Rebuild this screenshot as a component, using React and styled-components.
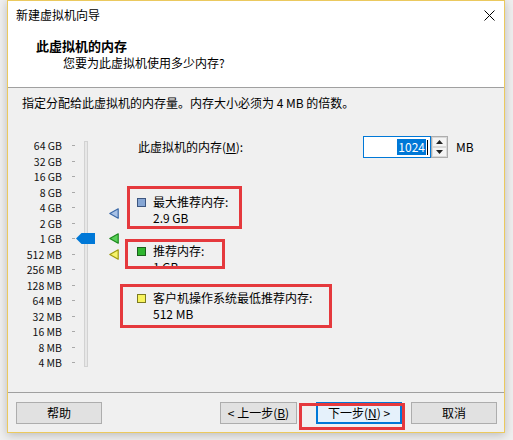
import React from 'react';
import styled, { createGlobalStyle } from 'styled-components';

const Global = createGlobalStyle`
  html, body { margin: 0; padding: 0; background: #ececec; }
  body {
    font-family: "Noto Sans CJK SC", "Noto Sans", sans-serif;
    font-size: 12px;
    color: #000;
  }
  * { box-sizing: border-box; }
`;

const Page = styled.div`
  width: 513px;
  height: 440px;
  padding-left: 7px;
  overflow: hidden;
  background: #efefef;
`;

const Window = styled.div`
  width: 498px;
  height: 433px;
  border: 1px solid #ebc95e;
  background: #f0f0f0;
  display: flex;
  flex-direction: column;
  box-shadow: 0 2px 9px rgba(0, 0, 0, 0.22);
`;

const TitleBar = styled.div`
  height: 29px;
  flex: 0 0 29px;
  background: #fff;
  display: flex;
  align-items: center;
  justify-content: space-between;
  padding: 0 9px 1px 8px;
  line-height: 16px;
`;

const CloseIcon = styled.svg`
  width: 11px;
  height: 11px;
  display: block;
`;

const Header = styled.div`
  height: 58px;
  flex: 0 0 58px;
  background: #fff;
  border-bottom: 1px solid #a0a0a0;
  padding: 7px 0 0 28px;
`;

const Heading = styled.div`
  font-weight: 700;
  font-size: 13px;
  line-height: 18px;
`;

const SubHeading = styled.div`
  line-height: 16px;
  padding-left: 27px;
`;

const Body = styled.div`
  flex: 1;
  display: flex;
  flex-direction: column;
`;

const Description = styled.div`
  margin-top: 7px;
  padding-left: 14px;
  line-height: 16px;
`;

const Main = styled.div`
  margin-top: 25px;
  display: flex;
`;

const SliderArea = styled.div`
  position: relative;
  flex: 0 0 112px;
  display: flex;
  align-items: flex-start;
  padding-top: 2px;
`;

const Scale = styled.div`
  width: 54px;
  display: flex;
  flex-direction: column;
`;

const ScaleLabel = styled.div`
  height: 15.5px;
  line-height: 15.5px;
  text-align: right;
  font-size: 10.5px;
  white-space: nowrap;
  color: #111;
`;

const Ticks = styled.div`
  margin-left: 10px;
  width: 3px;
  display: flex;
  flex-direction: column;
`;

const Tick = styled.div`
  height: 15.5px;
  display: flex;
  align-items: center;
  &::after {
    content: '';
    display: block;
    width: 3px;
    height: 1px;
    background: #a9a9a9;
  }
`;

const Track = styled.div`
  margin-left: 9px;
  margin-top: 3px;
  width: 4px;
  height: 226px;
  border: 1px solid #d2d2d2;
  background: #e7e7e7;
`;

const Thumb = styled.svg`
  position: absolute;
  left: 68px;
  width: 19px;
  height: 11px;
`;

const Marker = styled.svg`
  position: absolute;
  left: 101px;
  width: 10px;
  height: 11px;
`;

const RightColumn = styled.div`
  flex: 1;
  display: flex;
  flex-direction: column;
  align-items: flex-start;
`;

const MemoryRow = styled.div`
  height: 22px;
  display: flex;
  align-items: center;
  padding-left: 18px;
`;

const MemoryLabel = styled.div`
  flex: 0 0 225px;
  line-height: 16px;
`;

const Underline = styled.span`
  text-decoration: underline;
`;

const InputBox = styled.div`
  width: 68px;
  height: 22px;
  border: 1px solid #0078d7;
  background: #fff;
  display: flex;
  align-items: center;
  justify-content: flex-end;
  padding-right: 2px;
`;

const Selected = styled.span`
  background: #0078d7;
  color: #fff;
  line-height: 16px;
  padding: 0 1px;
`;

const Caret = styled.span`
  width: 1px;
  height: 15px;
  background: #000;
  margin-left: 1px;
`;

const Spin = styled.div`
  width: 17px;
  height: 22px;
  border: 1px solid #adadad;
  display: flex;
  flex-direction: column;
  background: #f0f0f0;
`;

const SpinButton = styled.div`
  flex: 1;
  display: flex;
  align-items: center;
  justify-content: center;
  border: 1px solid #d9d9d9;
  background: #f4f4f4;
`;

const Unit = styled.div`
  margin-left: 8px;
  line-height: 16px;
`;

const Callout = styled.div`
  margin-top: ${p => p.$mt}px;
  margin-left: ${p => p.$ml}px;
  width: ${p => p.$w}px;
  height: ${p => p.$h}px;
  padding: ${p => p.$pt}px 0 0 ${p => p.$pl}px;
  border: 3px solid #e5393d;
  overflow: hidden;
`;

const Legend = styled.div`
  display: flex;
  align-items: flex-start;
  line-height: 16px;
  white-space: nowrap;
`;

const Swatch = styled.div`
  flex: 0 0 9px;
  width: 9px;
  height: 9px;
  margin-top: 4px;
  margin-right: 7px;
  background: ${p => p.$fill};
  border: 1px solid ${p => p.$edge};
`;

const Footer = styled.div`
  flex: 0 0 40px;
  height: 40px;
  border-top: 1px solid #a0a0a0;
  padding: 9px 7px 0 8px;
  display: flex;
  align-items: flex-start;
  justify-content: space-between;
`;

const ButtonGroup = styled.div`
  display: flex;
  align-items: flex-start;
`;

const Button = styled.div`
  width: ${p => p.$w || 86}px;
  height: 22px;
  margin-left: ${p => p.$ml || 0}px;
  border: ${p => (p.$focused ? '2px solid #0078d7' : '1px solid #adadad')};
  background: ${p => (p.$focused ? '#e5f1fb' : '#e1e1e1')};
  display: flex;
  align-items: center;
  justify-content: center;
  line-height: 16px;
  white-space: nowrap;
`;

const NextWrap = styled.div`
  position: relative;
  margin-left: 19px;
`;

const RedFrame = styled.div`
  position: absolute;
  left: -17px;
  top: 1px;
  width: 106px;
  height: 27px;
  border: 3px solid #e5393d;
  pointer-events: none;
`;

const scale = ['64 GB', '32 GB', '16 GB', '8 GB', '4 GB', '2 GB', '1 GB', '512 MB', '256 MB', '128 MB', '64 MB', '32 MB', '16 MB', '8 MB', '4 MB'];

const rowTop = idx => 2 + 7.75 + 15.5 * idx - 5.5;

const markers = [
  { idx: 4.34, fill: '#a9c2e6', edge: '#3d6aa8' },
  { idx: 6.0, fill: '#58d058', edge: '#1d8a1d' },
  { idx: 7.0, fill: '#f6f36a', edge: '#a09a10' },
];

const legends = [
  { title: '最大推荐内存:', value: '2.9 GB', fill: '#86a6d4', edge: '#3d5680', mt: 28, ml: 7, w: 115, h: 43, pt: 5, pl: 7 },
  { title: '推荐内存:', value: '1 GB', fill: '#2fb52f', edge: '#1d5f1d', mt: 10, ml: 5, w: 100, h: 30, pt: 1, pl: 9 },
  { title: '客户机操作系统最低推荐内存:', value: '512 MB', fill: '#f7f35c', edge: '#7c7a20', mt: 15, ml: 0, w: 212, h: 44, pt: 3, pl: 14 },
];

export default function App() {
  return (
    <Page>
      <Global />
      <Window>
        <TitleBar>
          <span>新建虚拟机向导</span>
          <CloseIcon viewBox="0 0 11 11">
            <path d="M0.5 0.5 L10.5 10.5 M10.5 0.5 L0.5 10.5" stroke="#000" strokeWidth="1" fill="none" />
          </CloseIcon>
        </TitleBar>
        <Header>
          <Heading>此虚拟机的内存</Heading>
          <SubHeading>您要为此虚拟机使用多少内存?</SubHeading>
        </Header>
        <Body>
          <Description>指定分配给此虚拟机的内存量。内存大小必须为 4 MB 的倍数。</Description>
          <Main>
            <SliderArea>
              <Scale>
                {scale.map(s => (
                  <ScaleLabel key={s}>{s}</ScaleLabel>
                ))}
              </Scale>
              <Ticks>
                {scale.map(s => (
                  <Tick key={s} />
                ))}
              </Ticks>
              <Track />
              <Thumb viewBox="0 0 19 11" style={{ top: rowTop(6) }}>
                <polygon points="0,5.5 5.5,0 19,0 19,11 5.5,11" fill="#0078d7" />
              </Thumb>
              {markers.map((m, i) => (
                <Marker key={i} viewBox="0 0 10 11" style={{ top: rowTop(m.idx) }}>
                  <polygon points="0.8,5.5 9.2,0.8 9.2,10.2" fill={m.fill} stroke={m.edge} strokeWidth="1.2" strokeLinejoin="round" />
                </Marker>
              ))}
            </SliderArea>
            <RightColumn>
              <MemoryRow>
                <MemoryLabel>
                  此虚拟机的内存(<Underline>M</Underline>):
                </MemoryLabel>
                <InputBox>
                  <Selected>1024</Selected>
                  <Caret />
                </InputBox>
                <Spin>
                  <SpinButton>
                    <svg width="7" height="4" viewBox="0 0 7 4"><polygon points="0,4 3.5,0 7,4" fill="#222" /></svg>
                  </SpinButton>
                  <SpinButton>
                    <svg width="7" height="4" viewBox="0 0 7 4"><polygon points="0,0 7,0 3.5,4" fill="#222" /></svg>
                  </SpinButton>
                </Spin>
                <Unit>MB</Unit>
              </MemoryRow>
              {legends.map(l => (
                <Callout key={l.title} $mt={l.mt} $ml={l.ml} $w={l.w} $h={l.h} $pt={l.pt} $pl={l.pl}>
                  <Legend>
                    <Swatch $fill={l.fill} $edge={l.edge} />
                    <div>
                      <div>{l.title}</div>
                      <div>{l.value}</div>
                    </div>
                  </Legend>
                </Callout>
              ))}
            </RightColumn>
          </Main>
        </Body>
        <Footer>
          <Button>帮助</Button>
          <ButtonGroup>
            <Button $w={77}>&lt; 上一步(<Underline>B</Underline>)</Button>
            <NextWrap>
              <Button $focused>
                下一步(<Underline>N</Underline>) &gt;
              </Button>
              <RedFrame />
            </NextWrap>
            <Button $ml={9}>取消</Button>
          </ButtonGroup>
        </Footer>
      </Window>
    </Page>
  );
}
